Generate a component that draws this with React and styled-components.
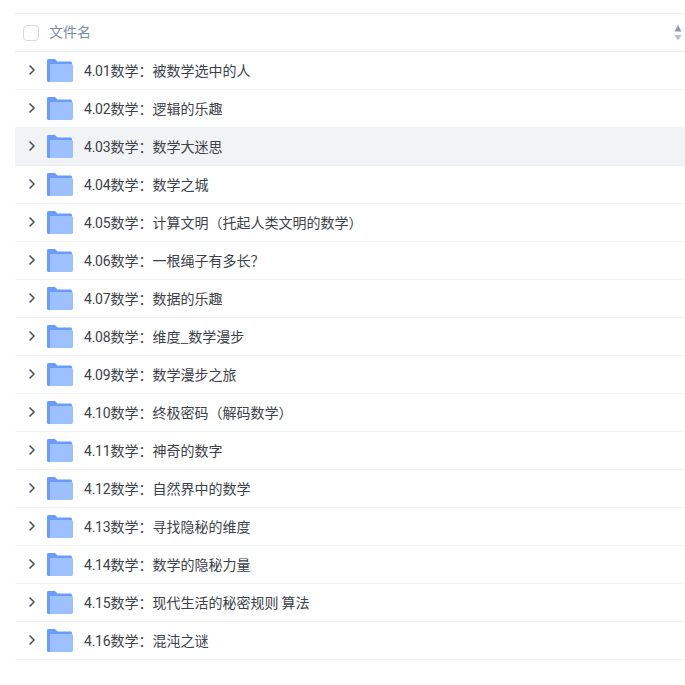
import React from "react";
import styled, { createGlobalStyle } from "styled-components";

const GlobalStyle = createGlobalStyle`
  html, body {
    margin: 0;
    padding: 0;
    background: #fff;
    overflow: hidden;
  }
  body {
    font-family: "Noto Sans CJK SC", "Roboto", sans-serif;
  }
`;

const Page = styled.div`
  width: 685px;
  height: 685px;
  box-sizing: border-box;
  padding: 13px 0 0 15px;
`;

const Table = styled.div`
  width: 670px;
  border-top: 1px solid #ebedf0;
`;

const Header = styled.div`
  height: 38px;
  box-sizing: border-box;
  border-bottom: 1px solid #ebeef2;
  display: flex;
  align-items: center;
  padding-left: 8px;
`;

const Checkbox = styled.span`
  width: 16px;
  height: 16px;
  box-sizing: border-box;
  border: 1px solid #d3dae5;
  border-radius: 4px;
  background: #fff;
  flex: none;
`;

const HeaderLabel = styled.span`
  margin: -4px 0 0 10px;
  flex: 1;
  font-size: 14px;
  line-height: 20px;
  color: #7b8ba5;
`;

const SortIcon = styled.svg`
  width: 8px;
  height: 16px;
  margin-right: 3px;
  flex: none;
`;

const Row = styled.div`
  height: 38px;
  box-sizing: border-box;
  border-bottom: 1px solid ${({ $hover }) => ($hover ? "#ebedf0" : "#f2f3f5")};
  background: ${({ $hover }) => ($hover ? "#f2f3f5" : "#fff")};
  display: flex;
  align-items: center;
`;

const Chevron = styled.svg`
  width: 8px;
  height: 12px;
  margin: -2px 0 0 13px;
  flex: none;
`;

const FolderIcon = styled.svg`
  width: 26px;
  height: 23px;
  margin-left: 11px;
  flex: none;
`;

const FileName = styled.span`
  margin-left: 11px;
  font-size: 14px;
  line-height: 20px;
  color: #3d4149;
  white-space: nowrap;
`;

const Code = styled.span`
  font-family: "Roboto", sans-serif;
  letter-spacing: -0.22px;
`;

const files = [
  ["4.01", "数学：被数学选中的人"],
  ["4.02", "数学：逻辑的乐趣"],
  ["4.03", "数学：数学大迷思"],
  ["4.04", "数学：数学之城"],
  ["4.05", "数学：计算文明（托起人类文明的数学）"],
  ["4.06", "数学：一根绳子有多长？"],
  ["4.07", "数学：数据的乐趣"],
  ["4.08", "数学：维度_数学漫步"],
  ["4.09", "数学：数学漫步之旅"],
  ["4.10", "数学：终极密码（解码数学）"],
  ["4.11", "数学：神奇的数字"],
  ["4.12", "数学：自然界中的数学"],
  ["4.13", "数学：寻找隐秘的维度"],
  ["4.14", "数学：数学的隐秘力量"],
  ["4.15", "数学：现代生活的秘密规则 算法"],
  ["4.16", "数学：混沌之谜"],
];

const Folder = () => (
  <FolderIcon viewBox="0 0 26 23">
    <path
      d="M0 1.5C0 .6.6 0 1.5 0H8L10.5 2.5H23.5C24.4 2.5 25 3 25 4V21.5C25 22.4 24.4 23 23.5 23H1.5C.6 23 0 22.4 0 21.5Z"
      fill="#6a9cff"
    />
    <path
      d="M3 5H24.5C25.4 5 26 5.5 26 6.5V21.5C26 22.4 25.4 23 24.5 23H3Z"
      fill="#9dc0ff"
    />
  </FolderIcon>
);

const App = () => {
  return (
    <Page>
      <GlobalStyle />
      <Table>
        <Header>
          <Checkbox />
          <HeaderLabel>文件名</HeaderLabel>
          <SortIcon viewBox="0 0 8 16">
            <path d="M4 0L7.5 6.5H.5Z" fill="#8c9bb5" />
            <path d="M.5 10H7.5L4 15.5Z" fill="#b4c0d4" />
          </SortIcon>
        </Header>
        {files.map(([code, name], i) => (
          <Row key={code} $hover={i === 2}>
            <Chevron viewBox="0 0 8 12">
              <path d="M1.5 1.5L6 6L1.5 10.5" fill="none" stroke="#4a5160" strokeWidth="1.5" />
            </Chevron>
            <Folder />
            <FileName>
              <Code>{code}</Code>
              {name}
            </FileName>
          </Row>
        ))}
      </Table>
    </Page>
  );
};

export default App;
